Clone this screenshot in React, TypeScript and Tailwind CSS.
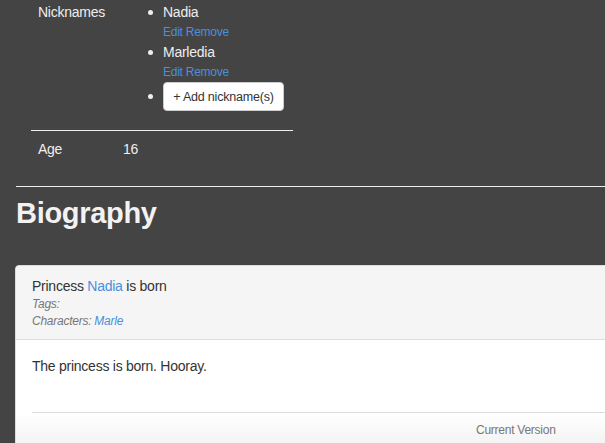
const nicknames = ['Nadia', 'Marledia'];

function Bullet() {
  return (
    <span className="w-[16px] shrink-0 flex">
      <span className="w-[5px] h-[5px] rounded-full bg-[#eeeeee] ml-[1px]" />
    </span>
  );
}

export default function App() {
  return (
    <div className="min-h-screen bg-[#444444] text-[#eeeeee] font-['Liberation_Sans',Arial,sans-serif] tracking-[-0.25px] overflow-hidden">
      <div className="pl-[15px] pt-[2px]">
        <div className="w-[262px] ml-[16px]">
          <div className="flex text-[14px] leading-[20px]">
            <div className="w-[116px] pl-[7px] shrink-0">Nicknames</div>
            <ul className="flex flex-col">
              {nicknames.map((n) => (
                <li key={n} className="flex flex-col">
                  <div className="flex items-center">
                    <Bullet />
                    <span>{n}</span>
                  </div>
                  <div className="pl-[16px] text-[12px] leading-[20px] text-[#4a8fdc]">
                    <a>Edit</a> <a>Remove</a>
                  </div>
                </li>
              ))}
              <li className="flex items-center">
                <Bullet />
                <button className="h-[29px] w-[121px] bg-white text-[#333333] text-[12.5px] tracking-[-0.2px] rounded-[4px] border border-[#cccccc]">
                  + Add nickname(s)
                </button>
              </li>
            </ul>
          </div>
          <div className="h-px bg-[#eeeeee] mt-[19px]" />
          <div className="flex text-[14px] leading-[20px] mt-[8px]">
            <div className="w-[92px] pl-[7px] shrink-0">Age</div>
            <div>16</div>
          </div>
        </div>
        <div className="h-px bg-[#eeeeee] mt-[27px] ml-[1px]" />
        <h1 className="text-[29px] font-bold leading-[34px] mt-[9px] ml-[1px] tracking-[-0.3px] text-[#f2f2f2]">Biography</h1>
        <div className="mt-[35px] w-[640px] bg-white rounded-[4px] border border-[#dddddd] text-[#333333] overflow-hidden">
          <div className="bg-[#f5f5f5] border-b border-[#dddddd] px-[16px] pt-[10px] pb-[9px]">
            <div className="text-[14px] leading-[20px]">
              Princess <a className="text-[#4a8fdc]">Nadia</a> is born
            </div>
            <div className="text-[12px] leading-[17px] italic text-[#777777]">Tags:</div>
            <div className="text-[12px] leading-[17px] italic text-[#777777]">
              Characters: <a className="text-[#4a8fdc]">Marle</a>
            </div>
          </div>
          <div className="px-[16px] pt-[16px]">
            <p className="text-[14px] leading-[20px]">The princess is born. Hooray.</p>
            <div className="h-px bg-[#dddddd] mt-[36px]" />
          </div>
          <div className="bg-gradient-to-b from-white to-[#f0f0f0] h-[40px] flex pt-[9px] pl-[460px]">
            <span className="text-[12px] leading-[17px] text-[#777777]">Current Version</span>
          </div>
        </div>
      </div>
    </div>
  );
}
